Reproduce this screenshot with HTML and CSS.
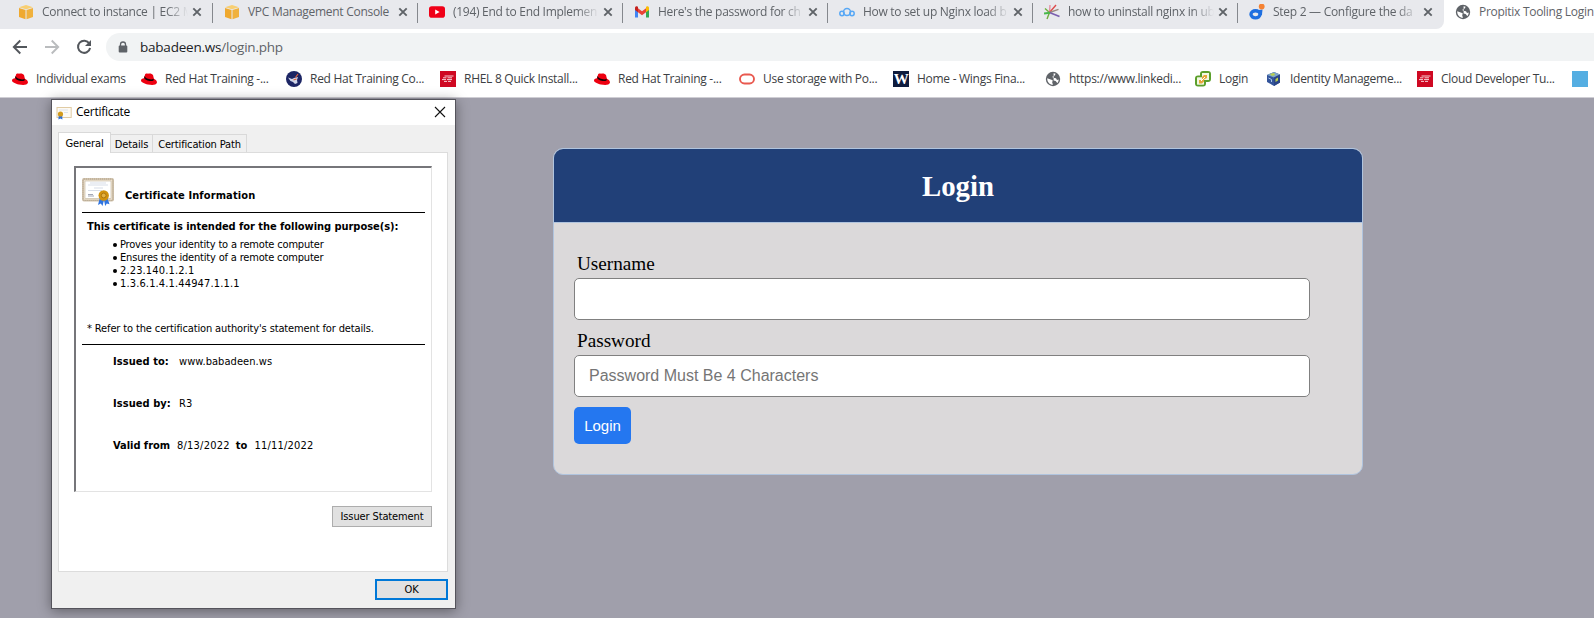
FILE: index.html
```
<!DOCTYPE html>
<html lang="en">
<head>
<meta charset="utf-8">
<title>Propitix Tooling Login</title>
<link rel="stylesheet" href="styles.css">
</head>
<body>
<svg class="defs" width="0" height="0" aria-hidden="true">
  <symbol id="x" viewBox="0 0 10 10"><path d="M1.3 1.3l7.4 7.4M8.7 1.3L1.3 8.7" stroke="#5f6368" stroke-width="1.9"/></symbol>
  <symbol id="cube" viewBox="0 0 16 16"><path d="M1 3.2L8 1l7 2.2-7 2z" fill="#f8cf72"/><path d="M1 4l6.5 2v9.2L1 13z" fill="#efa92f"/><path d="M15 4L8.5 6v9.2L15 13z" fill="#f0b13d"/></symbol>
  <symbol id="hat" viewBox="0 0 16 16"><path d="M0 9.500c0-1.400 1.300-2.200 2.900-2.300L4 3.700C4.500 2.300 6 2.500 7 2.800c1.500-.9 4.300-.2 5 1.300l.9 3.700c2 .8 3.400 2.400 3 4-.7 2.600-5.300 2.500-9 1.700C3.300 12.700 0 11.200 0 9.500z" fill="#ee0010"/><path d="M3.200 6.400c.2 2.600 6.300 4.500 9.300 3l.3-1.600c-2.500 1.500-8.200.2-9.200-2.700z" fill="#150205"/></symbol>
  <symbol id="globe" viewBox="0 0 16 16"><circle cx="8" cy="8" r="7.200" fill="#5f6368"/><path d="M8.600 2.200l2 .6-.8 1.600-2.200.8.200 1.600 3.200.5 1 1.700 1.700-.5c0 1.600-.6 2.800-1.400 3.600l-1.700-2.100-2-.5zM2.200 7.200l3.500 1.300 2 .7-.5 2.200.8 2.400c-3.500-.1-6-3-5.800-6.600z" fill="#fff"/></symbol>
  <symbol id="redbook" viewBox="0 0 16 16"><path d="M0 0h16v16H0z" fill="#cf0822"/><path d="M4.500 5h9M3 6.800h3.500m1 0h4.500M2 8.600h4m1 0h5M4 10.400h3m1 0h3" stroke="#fff" stroke-width="1" opacity=".8"/></symbol>
</svg>

<header class="browser">
  <nav class="tabs">
    <div class="tab"><svg class="ic"><use href="#cube"/></svg><span class="title"><span class="t">Connect to instance | EC2 M</span></span><svg class="close"><use href="#x"/></svg></div>
    <div class="tab"><svg class="ic"><use href="#cube"/></svg><span class="title plain"><span class="t">VPC Management Console</span></span><svg class="close"><use href="#x"/></svg></div>
    <div class="tab"><svg class="ic" viewBox="0 0 16 16"><rect y="2.200" width="16" height="11.500" rx="2.800" fill="#f00018"/><path d="M6.200 5.500v5l4.400-2.500z" fill="#fff"/></svg><span class="title"><span class="t">(194) End to End Implemen</span></span><svg class="close"><use href="#x"/></svg></div>
    <div class="tab"><svg class="ic" viewBox="0 0 16 16"><path d="M1 4v9.500h3V7z" fill="#4285f4"/><path d="M12 7v6.500h3V4z" fill="#34a853"/><path d="M4 4.200l4 3.100 4-3.100v4l-4 3-4-3z" fill="#ea4335"/><path d="M1 4c0-2 2-2 3-1.200v5.400L1 6z" fill="#c5221f"/><path d="M12 2.800c1-.8 3-.8 3 1.200v2l-3 2.200z" fill="#fbbc04"/></svg><span class="title"><span class="t">Here's the password for ch</span></span><svg class="close"><use href="#x"/></svg></div>
    <div class="tab"><svg class="ic" viewBox="0 0 16 16" fill="none" stroke="#58a8f5" stroke-width="1.500"><circle cx="3" cy="9.500" r="2.200"/><circle cx="8" cy="8" r="3.500"/><circle cx="13" cy="9.500" r="2.200"/></svg><span class="title"><span class="t">How to set up Nginx load b</span></span><svg class="close"><use href="#x"/></svg></div>
    <div class="tab"><svg class="ic" viewBox="0 0 16 16" fill="none" stroke-width="1.400"><path d="M5.500 8.500L1 4.500M5.500 8.500L3 15" stroke="#6fae3f"/><path d="M5.500 8.500L6 1" stroke="#e58fa0"/><path d="M5.500 8.500L12 1" stroke="#dc4b4b"/><path d="M5.500 8.500l9-3.200" stroke="#9a8a80"/><path d="M5.500 8.500l10 4" stroke="#7b5fb0" stroke-width="1.800"/><path d="M0 9.500l6-.8" stroke="#48b84a" stroke-width="2"/></svg><span class="title"><span class="t">how to uninstall nginx in ub</span></span><svg class="close"><use href="#x"/></svg></div>
    <div class="tab"><svg class="ic" viewBox="0 0 16 16"><ellipse cx="6.500" cy="10.300" rx="4.500" ry="3.600" fill="none" stroke="#1f6fe0" stroke-width="3.400"/><path d="M9.500 6l4-.6-.5 5-2 2z" fill="#1f6fe0"/><circle cx="12.700" cy="2.500" r="2.900" fill="#f58233"/></svg><span class="title"><span class="t">Step 2 — Configure the da</span></span><svg class="close"><use href="#x"/></svg></div>
    <div class="tab active"><svg class="ic"><use href="#globe"/></svg><span class="title plain"><span class="t">Propitix Tooling Login</span></span></div>
  </nav>
  <div class="toolbar">
    <svg class="nav" viewBox="0 0 16 16"><path d="M15 8H2M8.300 1.500L1.800 8l6.500 6.500" fill="none" stroke="#53575c" stroke-width="1.900"/></svg>
    <svg class="nav" viewBox="0 0 16 16"><path d="M1 8h13M7.700 1.500L14.200 8l-6.500 6.500" fill="none" stroke="#babcbe" stroke-width="1.900"/></svg>
    <svg class="nav" viewBox="0 0 16 16"><path d="M13.300 4.500A6.100 6.100 0 1 0 14.100 9" fill="none" stroke="#53575c" stroke-width="2"/><path d="M15 1v6H9z" fill="#53575c"/></svg>
    <div class="omnibox">
      <svg class="lock" viewBox="0 0 10 12"><path d="M2.500 5V3.500a2.500 2.500 0 0 1 5 0V5" fill="none" stroke="#5f6368" stroke-width="1.300"/><rect x=".7" y="4.500" width="8.600" height="7" rx="1" fill="#5f6368"/></svg>
      <span class="t url"><b>babadeen.ws</b>/login.php</span>
    </div>
  </div>
  <nav class="bookmarks">
    <a class="bm"><svg class="ic"><use href="#hat"/></svg><span class="t">Individual exams</span></a>
    <a class="bm"><svg class="ic"><use href="#hat"/></svg><span class="t">Red Hat Training -...</span></a>
    <a class="bm"><svg class="ic" viewBox="0 0 16 16"><circle cx="8" cy="8" r="8" fill="#1c2564"/><path d="M2 6.500l4 1.500 2-1 4-1-1 3 .5 3-2.500 1-2-2-2.500-1z" fill="#cfd5e8"/><path d="M9.500 6.500l2.500-3.500M7.500 9l3-1" stroke="#e0603f" stroke-width="1.200"/></svg><span class="t">Red Hat Training Co...</span></a>
    <a class="bm"><svg class="ic"><use href="#redbook"/></svg><span class="t">RHEL 8 Quick Install...</span></a>
    <a class="bm"><svg class="ic"><use href="#hat"/></svg><span class="t">Red Hat Training -...</span></a>
    <a class="bm"><svg class="ic" viewBox="0 0 16 16"><rect x="1" y="3.500" width="14" height="9" rx="4.500" fill="none" stroke="#e9594f" stroke-width="1.900"/></svg><span class="t">Use storage with Po...</span></a>
    <a class="bm"><span class="w">W</span><span class="t">Home - Wings Fina...</span></a>
    <a class="bm"><svg class="ic"><use href="#globe"/></svg><span class="t">https://www.linkedi...</span></a>
    <a class="bm"><svg class="ic" viewBox="0 0 16 16"><rect x="6" y="1" width="9" height="9" rx="2" fill="#e8f5d0" stroke="#5b9f2b" stroke-width="2"/><rect x="1" y="5.500" width="9" height="9" rx="2" fill="#e8f5d0" stroke="#5b9f2b" stroke-width="2"/><path d="M7 2h7v7H9v4.500H2v-7h5z" fill="#f1f8e2"/><path d="M4 12.500V9h3V6l2-2h3v3L9 8.500v2L7 12.500z" fill="#e6a63a"/><path d="M6 10l4-4" stroke="#fff" stroke-width="1"/></svg><span class="t">Login</span></a>
    <a class="bm"><svg class="ic" viewBox="0 0 16 16"><path d="M1 4l7-3 6 2.500v8L8 15l-7-4z" fill="#33549b"/><path d="M1 4l7-3 6 2.500-6 3z" fill="#7fa6c8"/><path d="M8 6.500l6-3v8L8 15z" fill="#2b4586"/><path d="M4 3l4-1 1 2-3 1zM9.500 8l2.500-1.500v3L9.500 11z" fill="#b9cf4a"/><path d="M2.500 7l3 1.500v2.500" fill="none" stroke="#a9c7e8"/></svg><span class="t">Identity Manageme...</span></a>
    <a class="bm"><svg class="ic"><use href="#redbook"/></svg><span class="t">Cloud Developer Tu...</span></a>
    <a class="bm"><span class="swatch"></span></a>
  </nav>
</header>

<main class="page">
  <section class="card">
    <h1>Login</h1>
    <form>
      <label for="u">Username</label>
      <input id="u" type="text">
      <label for="p">Password</label>
      <input id="p" type="password" placeholder="Password Must Be 4 Characters">
      <button type="button">Login</button>
    </form>
  </section>

  <section class="dialog">
    <div class="titlebar">
      <svg class="small-cert" viewBox="0 0 16 14"><rect x="1" y="1.500" width="14.200" height="10" fill="#fdfaf3" stroke="#e0cba4"/><path d="M3 4h9M8 6.500h4" stroke="#dde3ec"/><path d="M2.800 9l-.4 4.500 2-1 2 1L6.200 9z" fill="#2c6fd6"/><circle cx="4.500" cy="8" r="2.600" fill="#d39b1d"/></svg>
      <span class="t">Certificate</span>
      <svg class="dlg-close" viewBox="0 0 12 12"><path d="M1 1l10 10M11 1L1 11" stroke="#111" stroke-width="1.100"/></svg>
    </div>
    <div class="sheet-tabs"><div class="st on"><span class="t">General</span></div><div class="st"><span class="t">Details</span></div><div class="st"><span class="t">Certification Path</span></div></div>
    <div class="sheet">
      <div class="frame">
        <div class="head">
          <svg class="cert" viewBox="0 0 32 28"><rect x="1" y="1" width="30" height="21.500" rx="1" fill="#f0e4d2" stroke="#d2c4ae" stroke-width="2"/><rect x="1" y="1" width="30" height="21.500" rx="1" fill="none" stroke="#b3a48d" stroke-dasharray="1 1"/><rect x="3" y="3" width="26" height="17.500" fill="#fff" stroke="#bfb29c" stroke-width=".6"/><path d="M8 5h16M6 7h20M12 10h9M6 12.500h14" stroke="#cdd4e2" stroke-width=".8"/><path d="M6 16.500h5M6 18h6" stroke="#a3a7b5" stroke-width="1"/><path d="M18 19l-2 8 2.800-1.500L20.500 28l1.500-6 1.200 6 1.600-2.500 2.700.8L25 19z" fill="#2f74e0"/><circle cx="21.700" cy="17.500" r="5.200" fill="#d1920f"/><circle cx="21.700" cy="17.500" r="2.400" fill="#e3b143" stroke="#a56c05" stroke-width=".8"/></svg>
          <b class="t">Certificate Information</b>
        </div>
        <b class="purpose t">This certificate is intended for the following purpose(s):</b>
        <ul>
          <li>Proves your identity to a remote computer</li>
          <li>Ensures the identity of a remote computer</li>
          <li class="oid">2.23.140.1.2.1</li>
          <li class="oid">1.3.6.1.4.1.44947.1.1.1</li>
        </ul>
        <p class="refer t">* Refer to the certification authority's statement for details.</p>
        <div class="row"><b class="t">Issued to:</b><span class="t">www.babadeen.ws</span></div>
        <div class="row"><b class="t">Issued by:</b><span class="t">R3</span></div>
        <div class="row valid"><b class="t">Valid from</b><span class="t">8/13/2022</span><b class="t">to</b><span class="t">11/11/2022</span></div>
      </div>
      <div class="btn issuer">Issuer Statement</div>
    </div>
    <div class="btn ok">OK</div>
  </section>
</main>
</body>
</html>
```

FILE: styles.css
```
* { box-sizing: border-box; }
body { margin: 0; width: 1594px; height: 618px; overflow: hidden; background: #a09fab; }
svg { display: block; flex: none; }
.defs { position: absolute; }
.t { white-space: nowrap; }

.browser { height: 98px; background: #fff; border-bottom: 1px solid #cfced4; font: 12px/16px "Open Sans", "Noto Sans", sans-serif; letter-spacing: -.28px; color: #3c4043; }
.ic { width: 16px; height: 16px; flex: none; }

.tabs { display: flex; height: 29px; background: #fff; }
.tab { display: flex; align-items: center; width: 205px; height: 29px; padding: 0 0 5px 18px; background: #e8e9ed; color: #5f6368; flex: none; position: relative; }
.tab:nth-child(1) { width: 206px; }
.tab:nth-child(7) { width: 213px; border-radius: 0 0 8px 0; }
.tab:nth-child(-n+6)::after { content: ""; position: absolute; right: -7px; top: 3px; width: 1px; height: 20px; background: #85888d; z-index: 1; }
.title { flex: none; width: 154px; margin-left: 8px; -webkit-mask-image: linear-gradient(90deg, #000 124px, transparent 146px); mask-image: linear-gradient(90deg, #000 124px, transparent 146px); }
.title.plain { -webkit-mask-image: none; mask-image: none; }
.close { width: 10px; height: 10px; margin-left: -4px; }
.tab.active { width: 150px; padding-left: 11px; background: #fff; }
.tab.active .title { width: auto; }

.toolbar { display: flex; align-items: center; height: 36px; padding: 0 0 0 12px; }
.nav { width: 16px; height: 16px; margin-right: 16px; }
.omnibox { display: flex; align-items: center; flex: 1; height: 28px; margin-left: -2px; padding-left: 12px; background: #f1f3f4; border-radius: 14px 0 0 14px; font-size: 13.5px; line-height: 20px; }
.lock { width: 10px; height: 12px; margin-right: 12px; }
.url { color: #5f6368; letter-spacing: -.22px; }
.url b { font-weight: 400; color: #202124; }

.bookmarks { display: grid; height: 32px; padding: 0 0 4px 12px; align-items: center; grid-template-columns: 129px 145px 154px 154px 145px 154px 152px 150px 71px 151px 155px 22px; }
.bm { display: flex; align-items: center; gap: 8px; height: 28px; }
.w { width: 16px; height: 16px; background: #0f1c3d; color: #fff; font: bold 15px/16px "Liberation Serif", serif; text-align: center; }
.swatch { width: 16px; height: 16px; background: #55aee2; }

.page { position: relative; height: 520px; padding: 50px 0 0 553px; }
.card { width: 810px; height: 327px; background: #dbd9da; border: 1px solid #b0c4de; border-radius: 10px; overflow: hidden; }
.card h1 { margin: 0; height: 74px; background: #214078; border-bottom: 1px solid #b0c4de; color: #fff; text-align: center; font: bold 28.8px/74px "Liberation Serif", serif; }
.card form { display: flex; flex-direction: column; align-items: flex-start; padding: 30px 20px 0; }
.card label { font: 19.2px/22px "Liberation Serif", serif; color: #000; padding-left: 3px; margin-bottom: 3px; }
.card input { width: 736px; height: 42px; margin: 0 0 10px; padding: 0 14px; border: 1px solid #808080; border-radius: 5px; background: #fff; font: 16px "Liberation Sans", sans-serif; }
.card input::placeholder { color: #757575; }
.card button { width: 57px; height: 37px; padding: 0; border: 0; border-radius: 5px; background: #2477f0; color: #fff; font: 15px "Liberation Sans", sans-serif; }

.dialog { position: absolute; left: 51px; top: 1px; width: 405px; height: 510px; background: #f0f0f0; border: 1px solid #55545c; box-shadow: 0 2px 12px rgba(0,0,0,.4); font: 11px/13px "DejaVu Sans Condensed", "DejaVu Sans", sans-serif; color: #000; }
.titlebar { display: flex; align-items: center; height: 25px; padding: 0 9px 1px 4px; background: #fff; font: 12px/16px "Open Sans", sans-serif; letter-spacing: -.27px; }
.small-cert { width: 16px; height: 14px; margin: 1px 4px 0 0; }
.dlg-close { width: 12px; height: 12px; margin-left: auto; }
.sheet-tabs { display: flex; align-items: flex-end; height: 27px; padding-left: 6px; letter-spacing: -.14px; }
.st { width: 42px; height: 18px; padding-top: 3px; border: 1px solid #d9d9d9; border-width: 1px 1px 0 0; text-align: center; }
.st:last-child { width: 94px; }
.st.on { position: relative; width: 53px; height: 21px; margin-bottom: -1px; padding-top: 4px; border-left-width: 1px; background: #fff; }
.sheet { width: 390px; height: 420px; margin-left: 6px; padding: 13px 14px 0 15px; background: #fff; border: 1px solid #dcdcdc; }
.frame { width: 358px; height: 326px; border: 2px solid #76767a; border-right: 1px solid #e3e3e3; border-bottom: 1px solid #e3e3e3; padding: 0 6px; }
.head { display: flex; align-items: center; height: 45px; border-bottom: 1px solid #000; letter-spacing: .11px; }
.cert { width: 32px; height: 28px; margin: 4px 11px 0 0; }
.head b { margin-top: 10px; }
.purpose { display: block; padding: 7px 0 0 5px; letter-spacing: -.04px; }
ul { list-style: none; margin: 5px 0 0; padding: 0 0 0 38px; letter-spacing: -.18px; }
li { position: relative; }
.oid { letter-spacing: .14px; }
li::before { content: ""; position: absolute; left: -7px; top: 5px; width: 4px; height: 4px; border-radius: 2px; background: #000; }
.refer { margin: 0; height: 55px; padding: 32px 0 0 5px; border-bottom: 1px solid #000; letter-spacing: -.13px; }
.row { display: flex; height: 42px; padding: 10px 0 0 31px; letter-spacing: .06px; }
.row b:first-child { width: 66px; }
.row.valid b:first-child { width: 64px; letter-spacing: -.03px; }
.row.valid b:nth-child(3) { margin: 0 7px 0 6px; }
.row.valid span { letter-spacing: .22px; }
.btn { display: flex; align-items: center; justify-content: center; height: 21px; background: #e1e1e1; border: 1px solid #adadad; letter-spacing: -.12px; }
.issuer { width: 100px; margin: 14px 0 0 258px; }
.ok { width: 73px; margin: 7px 0 0 323px; border: 2px solid #0078d7; }
```
